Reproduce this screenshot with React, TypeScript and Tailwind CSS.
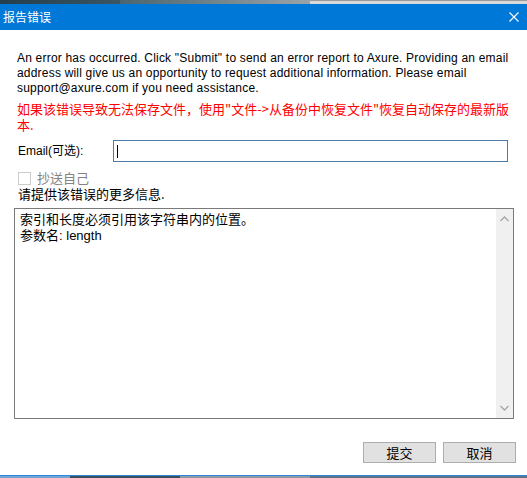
import React from 'react';

const sans = "font-['Segoe_UI','Liberation_Sans','Noto_Sans_CJK_SC',sans-serif]";
const cjk = "font-['Noto_Sans_CJK_SC',sans-serif]";

const ScrollArrow: React.FC<{ dir: 'up' | 'down' }> = ({ dir }) => (
  <svg width="9" height="6" viewBox="0 0 9 6" className="block">
    <path
      d={dir === 'up' ? 'M0.5 5 L4.5 1 L8.5 5' : 'M0.5 1 L4.5 5 L8.5 1'}
      fill="none"
      stroke="#a6a6a6"
      strokeWidth="1.3"
    />
  </svg>
);

const ErrorReportDialog: React.FC = () => {
  return (
    <div className={`w-[527px] h-[478px] flex flex-col bg-white overflow-hidden text-black ${sans}`}>
      {/* desktop behind the window */}
      <div className="h-[4px] flex shrink-0">
        <div className="w-[120px] bg-gradient-to-r from-[#24404c] to-[#3b5663]" />
        <div className="w-[190px] bg-gradient-to-r from-[#4b6570] to-[#9aa4a8]" />
        <div className="flex-1 bg-[#d9d9d9] border-t border-[#9a9a9a]" />
      </div>

      {/* Title bar */}
      <div className="h-[26px] shrink-0 bg-[#0078d7] flex items-center justify-between pl-[3px] pr-[8px] text-white text-[12px] leading-[16px]">
        <span className={cjk}>报告错误</span>
        <svg width="10" height="10" viewBox="0 0 10 10">
          <path d="M0.5 0.5 L9.5 9.5 M9.5 0.5 L0.5 9.5" stroke="white" strokeWidth="1.1" />
        </svg>
      </div>

      {/* Body */}
      <div className="flex-1 flex flex-col">
        <p className="mt-[21px] ml-[17px] text-[12px] leading-[15px] tracking-[0.2px] whitespace-nowrap">
          An error has occurred. Click "Submit" to send an error report to Axure. Providing an email
          <br />
          address will give us an opportunity to request additional information. Please email
          <br />
          support@axure.com if you need assistance.
        </p>

        <p className={`mt-[5px] ml-[17px] h-[32px] text-[13px] leading-[16px] text-[#ff0000] whitespace-nowrap ${cjk}`}>
          <span className="block h-[16px]">如果该错误导致无法保存文件，使用"文件-&gt;从备份中恢复文件"恢复自动保存的最新版</span>
          <span className="block h-[16px]">本.</span>
        </p>

        <div className="mt-[7px] h-[22px] flex items-center">
          <label className="ml-[18px] w-[95px] text-[12px] leading-[16px]">Email(可选):</label>
          <div className="w-[395px] h-[22px] border border-[#4f7ba6] flex items-center pl-[3px]">
            <span className="w-px h-[13px] bg-black" />
          </div>
        </div>

        <div className="mt-[8px] h-[16px] flex items-center ml-[18px]">
          <span className="w-[13px] h-[13px] border border-[#cccccc] bg-white" />
          <span className={`ml-[6px] text-[13px] leading-[16px] text-[#838383] ${cjk}`}>抄送自己</span>
        </div>

        <div className={`h-[16px] flex items-center ml-[18px] text-[13px] leading-[16px] ${cjk}`}>
          请提供该错误的更多信息.
        </div>

        <div className="mt-[6px] ml-[14px] w-[500px] h-[211px] border border-[#7a7a7a] flex">
          <div className="flex-1 pl-[5px] pt-[2px] text-[13px] leading-[16px]">
            <div className={`h-[16px] ${cjk}`}>索引和长度必须引用该字符串内的位置。</div>
            <div className="h-[16px]">
              <span className={cjk}>参数名</span>: length
            </div>
          </div>
          <div className="w-[17px] bg-[#f0f0f0] flex flex-col items-center justify-between py-[7px]">
            <ScrollArrow dir="up" />
            <ScrollArrow dir="down" />
          </div>
        </div>

        <div className="mt-[23px] flex justify-end gap-[7px] pr-[11px]">
          <button className={`w-[73px] h-[21px] bg-[#e1e1e1] border border-[#adadad] text-[13px] leading-[16px] ${cjk} flex items-center justify-center`}>
            提交
          </button>
          <button className={`w-[73px] h-[21px] bg-[#e1e1e1] border border-[#adadad] text-[13px] leading-[16px] ${cjk} flex items-center justify-center`}>
            取消
          </button>
        </div>
      </div>

      {/* window edge and desktop below */}
      <div className="h-px shrink-0 bg-[#2b88d8]" />
      <div className="h-[2px] shrink-0 flex">
        <div className="w-[70px] bg-[#6fa6d6]" />
        <div className="w-[110px] bg-[#3a4f5c]" />
        <div className="w-[130px] bg-[#8d9aa3]" />
        <div className="flex-1 bg-[#5d7486]" />
      </div>
    </div>
  );
};

export default function App() {
  return <ErrorReportDialog />;
}
